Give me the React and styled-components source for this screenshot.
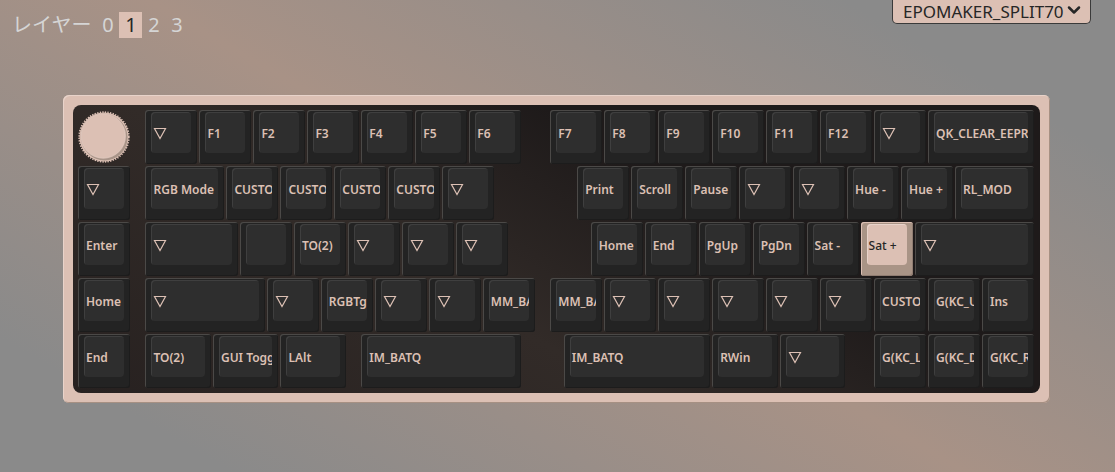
import { useState } from 'react'
import styled, { createGlobalStyle, css } from 'styled-components'
import { ChevronDown } from 'lucide-react'

const GlobalStyle = createGlobalStyle`
  * {
    box-sizing: border-box;
  }
  body {
    margin: 0;
    min-height: 100vh;
    background: linear-gradient(30deg, #8a8a8a 12%, #a89286 50%, #8a8a8a 86%);
    font-family: 'Noto Sans', 'Noto Sans CJK JP', sans-serif;
  }
  button, select {
    font-family: inherit;
  }
`

// x and w are in quarter key units
const T = '▽'
const rows = [
  [
    [5, 4, T], [9, 4, 'F1'], [13, 4, 'F2'], [17, 4, 'F3'], [21, 4, 'F4'], [25, 4, 'F5'], [29, 4, 'F6'],
    [35, 4, 'F7'], [39, 4, 'F8'], [43, 4, 'F9'], [47, 4, 'F10'], [51, 4, 'F11'], [55, 4, 'F12'], [59, 4, T],
    [63, 8, 'QK_CLEAR_EEPR'],
  ],
  [
    [0, 4, T], [5, 6, 'RGB Mode'], [11, 4, 'CUSTO'], [15, 4, 'CUSTO'], [19, 4, 'CUSTO'], [23, 4, 'CUSTO'], [27, 4, T],
    [37, 4, 'Print'], [41, 4, 'Scroll'], [45, 4, 'Pause'], [49, 4, T], [53, 4, T], [57, 4, 'Hue -'], [61, 4, 'Hue +'],
    [65, 6, 'RL_MOD'],
  ],
  [
    [0, 4, 'Enter'], [5, 7, T], [12, 4, ''], [16, 4, 'TO(2)'], [20, 4, T], [24, 4, T], [28, 4, T],
    [38, 4, 'Home'], [42, 4, 'End'], [46, 4, 'PgUp'], [50, 4, 'PgDn'], [54, 4, 'Sat -'], [58, 4, 'Sat +'], [62, 9, T],
  ],
  [
    [0, 4, 'Home'], [5, 9, T], [14, 4, T], [18, 4, 'RGBTg'], [22, 4, T], [26, 4, T], [30, 4, 'MM_BA'],
    [35, 4, 'MM_BA'], [39, 4, T], [43, 4, T], [47, 4, T], [51, 4, T], [55, 4, T], [59, 4, 'CUSTO'],
    [63, 4, 'G(KC_U'], [67, 4, 'Ins'],
  ],
  [
    [0, 4, 'End'], [5, 5, 'TO(2)'], [10, 5, 'GUI Togg'], [15, 5, 'LAlt'], [21, 12, 'IM_BATQ'],
    [36, 11, 'IM_BATQ'], [47, 5, 'RWin'], [52, 5, T], [59, 4, 'G(KC_L'], [63, 4, 'G(KC_D'], [67, 4, 'G(KC_R'],
  ],
]

const App = () => {
  const [layer, setLayer] = useState(1)
  const [selected, setSelected] = useState('2-58')

  return (
    <>
      <GlobalStyle />
      <Header>
        <Layers>
          <LayerLabel>レイヤー</LayerLabel>
          {[0, 1, 2, 3].map((n) => (
            <LayerButton key={n} $active={n === layer} onClick={() => setLayer(n)}>{n}</LayerButton>
          ))}
        </Layers>
        <DeviceBox>
          <DeviceSelect aria-label="Keyboard">
            <option>EPOMAKER_SPLIT70</option>
          </DeviceSelect>
          <Chevron size={20} strokeWidth={3} />
        </DeviceBox>
      </Header>
      <Main>
        <Case>
          <Plate>
            {rows.map((row, y) => (
              <Row key={y}>
                {y === 0 && <Knob />}
                {row.map(([x, w, label]) => {
                  const id = `${y}-${x}`
                  return (
                    <Key key={id} $x={x} $w={w} $active={id === selected} onClick={() => setSelected(id)}>
                      <Cap $active={id === selected}>
                        {label === T ? <Transparent /> : label}
                      </Cap>
                    </Key>
                  )
                })}
              </Row>
            ))}
          </Plate>
        </Case>
      </Main>
    </>
  )
}

export default App

const Knob = () => (
  <KnobButton aria-label="Encoder">
    <svg width="52" height="54" viewBox="0 0 52 54">
      <circle cx="26" cy="27" r="24.5" fill="#dcc0b4" />
      <circle cx="26" cy="27" r="24.8" fill="none" stroke="#dcc0b4" strokeWidth="1.8" strokeDasharray="1.3 1.3" />
      <circle cx="26.6" cy="27.6" r="23" fill="#a89488" />
      <circle cx="25.2" cy="26" r="22.8" fill="#c9afa4" />
      <circle cx="25.2" cy="26" r="22" fill="#dcc0b4" stroke="#e2ccc2" strokeWidth="0.6" />
    </svg>
  </KnobButton>
)

const Transparent = () => (
  <svg width="14" height="13" viewBox="0 0 14 13" role="img" aria-label="▽">
    <path d="M1.5 1.5H12.5L7 11.5Z" fill="none" stroke="currentColor" strokeWidth="1.2" />
  </svg>
)

const Header = styled.header`
  display: flex;
  justify-content: space-between;
  align-items: flex-start;
  height: 95px;
  padding: 0 24px 0 12px;
`

const Layers = styled.nav`
  display: flex;
  align-items: center;
  padding-top: 12px;
  color: #d5d5d5;
`

const LayerLabel = styled.span`
  margin-right: 5px;
  font-size: 20px;
  line-height: 26px;
`

const LayerButton = styled.button`
  width: 23px;
  height: 26px;
  padding: 0;
  border: 0;
  background: ${({ $active }) => ($active ? '#dcc0b4' : 'transparent')};
  color: ${({ $active }) => ($active ? '#262626' : 'inherit')};
  font-size: 20px;
  line-height: 26px;
`

const DeviceBox = styled.div`
  position: relative;
`

const DeviceSelect = styled.select`
  appearance: none;
  display: block;
  width: 199px;
  height: 24px;
  padding: 0 22px 2px 10px;
  border: 1px solid #3a3a3a;
  border-top: 0;
  border-radius: 0 0 5px 5px;
  background: #dcc0b4;
  color: #262626;
  font-size: 17px;
`

const Chevron = styled(ChevronDown)`
  position: absolute;
  right: 7px;
  top: 0;
  color: #262626;
  pointer-events: none;
`

const Main = styled.main`
  padding: 0 65px 24px 63px;
`

const Case = styled.section`
  padding: 10px;
  border-radius: 6px;
  background: #dcc0b4;
  box-shadow: inset 1px 1px #e8d3ca, inset -1px -1px #a69083;
`

const Plate = styled.div`
  display: grid;
  gap: 2px;
  padding: 5px 4px 5px 5px;
  border-radius: 8px;
  background: linear-gradient(30deg, #272120 0%, #322b28 38%, #1e1a1a 66%, #1e1a1a 100%);
`

const Row = styled.div`
  display: grid;
  grid-template-columns: repeat(71, minmax(0, 1fr));
  height: 54px;
`

const KnobButton = styled.button`
  grid-area: 1 / 1 / 2 / span 4;
  display: flex;
  padding: 0;
  border: 0;
  background: none;
`

const Key = styled.button`
  grid-area: ${({ $x, $w }) => `1 / ${$x + 1} / 2 / span ${$w}`};
  display: flex;
  align-items: flex-start;
  margin-right: 2px;
  padding: 2px 6px 11px 6px;
  border: 0;
  border-radius: 3px;
  background: #232323;
  box-shadow: inset 1px 1px #4b4947, inset -1px -1px #1c1c1c;
  ${({ $active }) => $active && css`
    background: #a99486;
    box-shadow: inset 1px 1px #dcc0b4, inset -1px -1px #8f7c71;
  `}
`

const Cap = styled.span`
  display: flex;
  align-items: center;
  flex: 1;
  min-width: 0;
  height: 41px;
  padding: 2px 0 0 2px;
  overflow: hidden;
  border-radius: 4px;
  background: #2e2e2e;
  box-shadow: inset 1px 1px #3f3f3f;
  color: #dcc0b4;
  font-size: 12px;
  font-weight: 600;
  line-height: 16px;
  white-space: nowrap;
  svg {
    flex: none;
  }
  ${({ $active }) => $active && css`
    background: #dcc0b4;
    box-shadow: inset 1px 1px #e8d3ca;
    color: #262626;
    font-weight: 500;
  `}
`
